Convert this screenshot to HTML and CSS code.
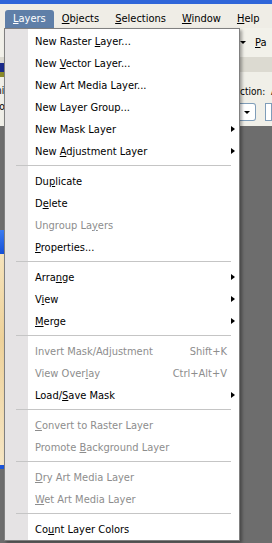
FILE: index.html
```html
<!DOCTYPE html>
<html lang="en">
<head>
    <meta charset="UTF-8">
    <meta name="viewport" content="width=device-width, initial-scale=1.0">
    <title>Layers menu</title>
    <link rel="stylesheet" href="styles.css">
</head>
<body>
    <div id="app">
        <div class="titlebar"></div>
        <div class="menubar">
            <span class="mb-item active"><u>L</u>ayers</span>
            <span class="mb-item"><u>O</u>bjects</span>
            <span class="mb-item"><u>S</u>elections</span>
            <span class="mb-item"><u>W</u>indow</span>
            <span class="mb-item"><u>H</u>elp</span>
        </div>
        <div class="toolbar tb-top">
            <div class="tb-right">
                <span class="drop-arrow"></span>
                <span class="tb-text"><u>P</u>a</span>
            </div>
        </div>
        <div class="toolbar tb-band">
            <span class="tool-icon"></span>
        </div>
        <div class="toolbar tb-options">
            <div class="tb-left">
                <span class="opt-text">ni</span>
                <span class="opt-text">fo</span>
            </div>
            <div class="tb-right">
                <div class="opt-label">ction: <span class="opt-a">A</span></div>
                <div class="opt-controls">
                    <span class="combo"><span class="drop-arrow"></span></span>
                    <span class="field"></span>
                </div>
            </div>
        </div>
        <div class="workspace">
            <div class="docwin">
                <div class="doc-title"></div>
                <div class="doc-image"></div>
            </div>
        </div>
    </div>

    <!-- dropdown for the Layers menu -->
    <ul class="menu">
        <li class="item"><span class="label">New Raster <u>L</u>ayer...</span></li>
        <li class="item"><span class="label">New <u>V</u>ector Layer...</span></li>
        <li class="item"><span class="label">New Art Media Layer...</span></li>
        <li class="item"><span class="label">New Layer Group...</span></li>
        <li class="item"><span class="label">New Mask Layer</span><span class="sub"></span></li>
        <li class="item"><span class="label">New <u>A</u>djustment Layer</span><span class="sub"></span></li>
        <li class="sep"></li>
        <li class="item"><span class="label">Du<u>p</u>licate</span></li>
        <li class="item"><span class="label">D<u>e</u>lete</span></li>
        <li class="item disabled"><span class="label">Ungroup La<u>y</u>ers</span></li>
        <li class="item"><span class="label"><u>P</u>roperties...</span></li>
        <li class="sep"></li>
        <li class="item"><span class="label">Arra<u>n</u>ge</span><span class="sub"></span></li>
        <li class="item"><span class="label">V<u>i</u>ew</span><span class="sub"></span></li>
        <li class="item"><span class="label"><u>M</u>erge</span><span class="sub"></span></li>
        <li class="sep"></li>
        <li class="item disabled"><span class="label">Invert Mask/Ad<u>j</u>ustment</span><span class="key">Shift+K</span></li>
        <li class="item disabled"><span class="label">View Over<u>l</u>ay</span><span class="key">Ctrl+Alt+V</span></li>
        <li class="item"><span class="label">Load/<u>S</u>ave Mask</span><span class="sub"></span></li>
        <li class="sep"></li>
        <li class="item disabled"><span class="label"><u>C</u>onvert to Raster Layer</span></li>
        <li class="item disabled"><span class="label">Promote <u>B</u>ackground Layer</span></li>
        <li class="sep"></li>
        <li class="item disabled"><span class="label"><u>D</u>ry Art Media Layer</span></li>
        <li class="item disabled"><span class="label"><u>W</u>et Art Media Layer</span></li>
        <li class="sep"></li>
        <li class="item"><span class="label">Co<u>u</u>nt Layer Colors</span></li>
    </ul>
</body>
</html>
```

FILE: styles.css
```css
body {
    margin: 0;
    font-family: "DejaVu Sans Condensed", "DejaVu Sans", sans-serif;
    font-size: 11px;
    color: #000;
}
#app {
    width: 272px;
    height: 543px;
    display: flex;
    flex-direction: column;
    overflow: hidden;
    background: #6d6d6d;
}
.titlebar {
    height: 4px;
    background: #2f66d9;
}
.menubar {
    height: 24px;
    background: #efede6;
    display: flex;
    align-items: flex-end;
    padding-left: 5px;
    white-space: nowrap;
}
.mb-item {
    height: 18px;
    line-height: 17px;
    padding: 0 8px;
}
.mb-item.active {
    background: #5f7fa8;
    color: #fff;
    border-radius: 3px 3px 0 0;
}

/* toolbars behind the menu */
.toolbar {
    display: flex;
    white-space: nowrap;
    overflow: hidden;
}
.tb-top {
    height: 29px;
    background: #f2f1ea;
}
.tb-band {
    height: 15px;
    background: #dcdad1;
}
.tb-options {
    height: 54px;
    background: #f0efe8;
}
.tb-left {
    width: 6px;
    display: flex;
    flex-direction: column;
    border-top: 5px solid #8a8a2a;
}
.tb-right {
    margin-left: auto;
    width: 32px;
    overflow: hidden;
}
.tb-top .tb-right {
    display: flex;
    align-items: center;
    gap: 9px;
}
.drop-arrow {
    display: inline-block;
    width: 0;
    height: 0;
    border-left: 3px solid transparent;
    border-right: 3px solid transparent;
    border-top: 3px solid #000;
}
.tool-icon {
    display: block;
    width: 5px;
    height: 9px;
    margin-top: 6px;
    background: #1a2a8a;
}
.opt-text {
    font-size: 10px;
    line-height: 16px;
    margin-left: -4px;
}
.opt-text:first-child {
    margin-top: 6px;
}
.opt-label {
    margin-top: 14px;
    line-height: 12px;
    font-size: 10px;
}
.opt-a {
    margin-left: 3px;
}
.opt-controls {
    display: flex;
    gap: 9px;
    margin-top: 5px;
}
.combo {
    width: 22px;
    height: 18px;
    box-sizing: border-box;
    border: 1px solid #7f9db9;
    border-left: none;
    border-radius: 0 3px 3px 0;
    background: #fff;
    display: flex;
    align-items: center;
    justify-content: flex-end;
    padding-right: 5px;
}
.field {
    width: 10px;
    height: 18px;
    box-sizing: border-box;
    border: 1px solid #7f9db9;
    background: #fff;
}
.workspace {
    flex: 1;
    background: #6d6d6d;
}
.docwin {
    width: 5px;
    margin-top: 104px;
}
.doc-title {
    height: 24px;
    background: linear-gradient(#3c7cf0, #1550d8);
}
.doc-image {
    height: 211px;
    background: linear-gradient(#f6e4bc, #eed29a 40%, #f6e6c4);
    border-bottom: 4px solid #1d55d9;
}

/* the open menu */
.menu {
    position: absolute;
    left: 4px;
    top: 28px;
    width: 236px;
    margin: 0;
    padding: 1px 0 0;
    list-style: none;
    box-sizing: border-box;
    border: 1px solid #808080;
    background: linear-gradient(to right, #e5e3e4 23px, #fff 23px);
    box-shadow: 2px 2px 3px rgba(0, 0, 0, 0.35);
    white-space: nowrap;
}
.item {
    display: flex;
    align-items: center;
    height: 22px;
    padding-left: 30px;
}
.label {
    flex: 1;
}
.key {
    margin-right: 12px;
}
.sub {
    width: 12px;
    height: 7px;
    position: relative;
}
.sub::after {
    content: "";
    position: absolute;
    left: 4px;
    top: 0;
    border-left: 4px solid #000;
    border-top: 3.5px solid transparent;
    border-bottom: 3.5px solid transparent;
}
.disabled {
    color: #8d8d8d;
}
.sep {
    height: 0;
    margin: 3px 8px 4px 11px;
    border-top: 1px solid #c5c5c5;
}
```
